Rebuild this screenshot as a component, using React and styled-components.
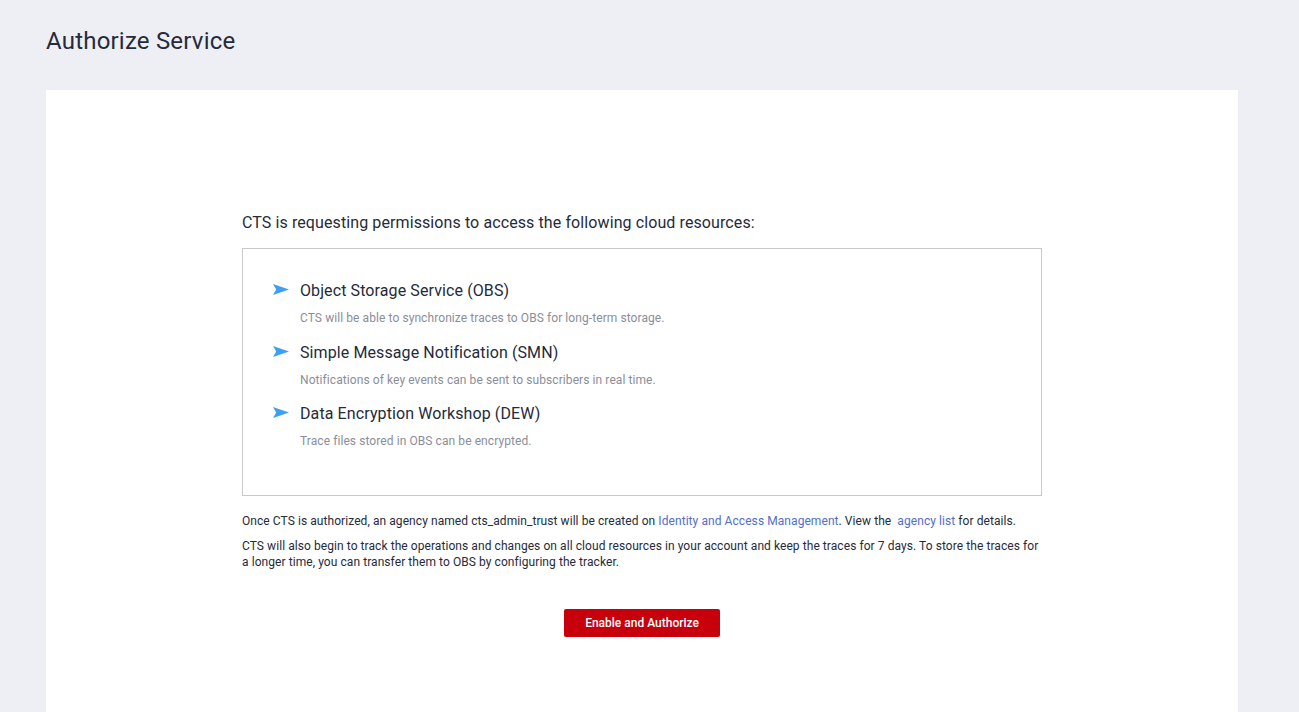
import React from "react";
import styled, { createGlobalStyle } from "styled-components";

const GlobalStyle = createGlobalStyle`
  html, body { margin: 0; padding: 0; }
  body {
    background: #eeeff4;
    font-family: Roboto, "Liberation Sans", sans-serif;
    color: #252b3a;
  }
`;

const Page = styled.div`
  padding: 0 61px 0 46px;
  min-height: 712px;
  box-sizing: border-box;
  display: flex;
  flex-direction: column;
`;

const Title = styled.h1`
  margin: 0;
  padding: 26px 0 0;
  height: 90px;
  box-sizing: border-box;
  font-size: 24px;
  font-weight: 400;
  line-height: 30px;
  letter-spacing: 0.2px;
  color: #252b3a;
`;

const Card = styled.div`
  background: #fff;
  flex: 1;
  display: flex;
  justify-content: center;
  padding-top: 121px;
  padding-bottom: 60px;
`;

const Content = styled.div`
  width: 800px;
  display: flex;
  flex-direction: column;
`;

const Lead = styled.p`
  margin: 0 0 13px;
  font-size: 16px;
  line-height: 24px;
  letter-spacing: 0.1px;
  color: #252b3a;
`;

const Box = styled.div`
  border: 1px solid #c9cacf;
  height: 248px;
  box-sizing: border-box;
  padding: 30px 30px 0;
  display: flex;
  flex-direction: column;
  gap: 13.5px;
`;

const Item = styled.div`
  display: flex;
  flex-direction: column;
`;

const ItemHead = styled.div`
  display: flex;
  align-items: center;
  gap: 11px;
  font-size: 16px;
  line-height: 24px;
  letter-spacing: 0.1px;
  color: #252b3a;
`;

const Arrow = styled.svg`
  width: 16px;
  height: 11px;
  flex: none;
  margin-top: -3px;
`;

const ItemDesc = styled.div`
  margin: 6px 0 0 27px;
  font-size: 12px;
  line-height: 18px;
  letter-spacing: 0.08px;
  color: #8a8e99;
`;

const Note = styled.p`
  margin: ${(p) => p.$mt || 0}px 0 0;
  font-size: 12px;
  line-height: 16px;
  color: #252b3a;
  letter-spacing: 0.07px;
`;

const Link = styled.a`
  color: #526ecc;
  text-decoration: none;
  cursor: pointer;
`;

const Actions = styled.div`
  display: flex;
  justify-content: center;
  margin-top: 39px;
`;

const Button = styled.button`
  width: 156px;
  height: 28px;
  border: none;
  border-radius: 2px;
  background: #c7000b;
  color: #fff;
  font-family: Roboto, "Liberation Sans", sans-serif;
  font-size: 12px;
  font-weight: 500;
  cursor: pointer;
`;

const ArrowIcon = () => (
  <Arrow viewBox="0 0 16 11">
    <path d="M0 0 L16 5.5 L0 11 L3.2 5.5 Z" fill="#3f9ff0" />
  </Arrow>
);

const services = [
  {
    name: "Object Storage Service (OBS)",
    desc: "CTS will be able to synchronize traces to OBS for long-term storage.",
  },
  {
    name: "Simple Message Notification (SMN)",
    desc: "Notifications of key events can be sent to subscribers in real time.",
  },
  {
    name: "Data Encryption Workshop (DEW)",
    desc: "Trace files stored in OBS can be encrypted.",
  },
];

export default function App() {
  return (
    <>
      <GlobalStyle />
      <Page>
        <Title>Authorize Service</Title>
        <Card>
          <Content>
            <Lead>CTS is requesting permissions to access the following cloud resources:</Lead>
            <Box>
              {services.map((s) => (
                <Item key={s.name}>
                  <ItemHead>
                    <ArrowIcon />
                    {s.name}
                  </ItemHead>
                  <ItemDesc>{s.desc}</ItemDesc>
                </Item>
              ))}
            </Box>
            <Note $mt={17}>
              Once CTS is authorized, an agency named cts_admin_trust will be created on{" "}
              <Link>Identity and Access Management</Link>. View the &nbsp;<Link>agency list</Link> for details.
            </Note>
            <Note $mt={9}>
              CTS will also begin to track the operations and changes on all cloud resources in your account and keep
              the traces for 7 days. To store the traces for a longer time, you can transfer them to OBS by configuring
              the tracker.
            </Note>
            <Actions>
              <Button>Enable and Authorize</Button>
            </Actions>
          </Content>
        </Card>
      </Page>
    </>
  );
}
